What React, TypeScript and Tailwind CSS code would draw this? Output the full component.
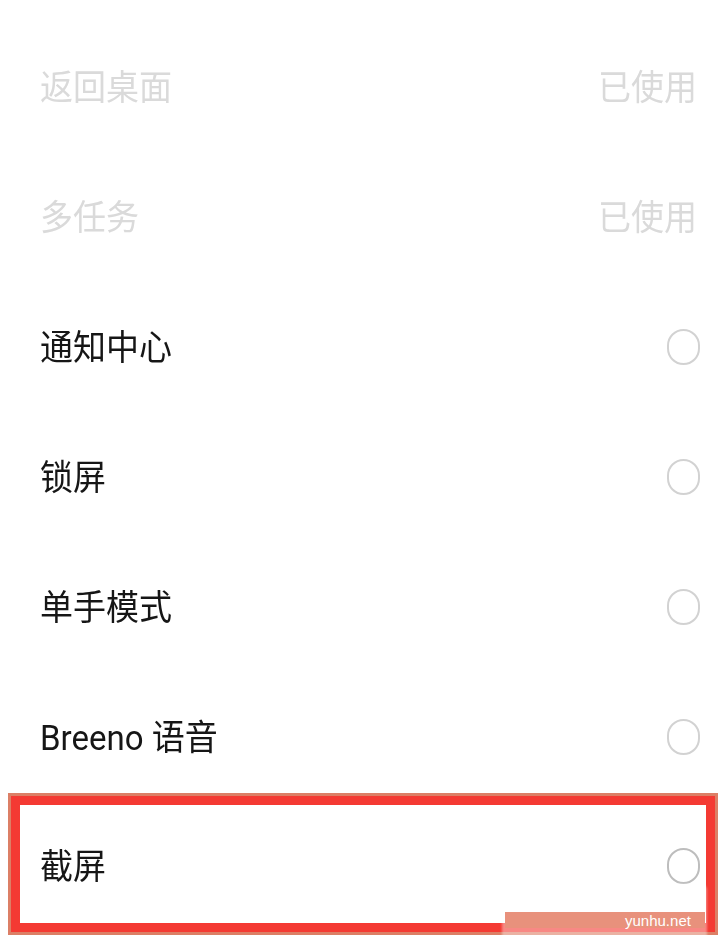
const items = [
  { id: 1, label: "返回桌面", used: true },
  { id: 2, label: "多任务", used: true },
  { id: 3, label: "通知中心", used: false },
  { id: 4, label: "锁屏", used: false },
  { id: 5, label: "单手模式", used: false },
  { id: 6, label: "Breeno 语音", used: false },
];

const font = { fontFamily: 'Roboto, "Noto Sans CJK SC", sans-serif' };

const Radio = ({ dark }: { dark?: boolean }) => (
  <span
    className={`block w-[33px] h-[36px] rounded-full border-2 ${
      dark ? "border-[#bdbdbd]" : "border-[#d2d2d2]"
    }`}
  />
);

const ShortcutList = () => {
  return (
    <div className="relative w-[725px] h-[942px] bg-white overflow-hidden" style={font}>
      <div className="pt-[22px]">
        {items.map((item) => (
          <div
            key={item.id}
            className="h-[130px] flex items-center justify-between pl-[40px] pr-[25px]"
          >
            <span
              className={`text-[33px] leading-none scale-y-[1.07] ${
                item.used ? "text-[#dadada]" : "text-[#161616]"
              }`}
            >
              {item.label}
            </span>
            {item.used ? (
              <span className="text-[33px] leading-none scale-y-[1.07] text-[#dadada] pr-[3px]">
                已使用
              </span>
            ) : (
              <Radio />
            )}
          </div>
        ))}
      </div>

      {/* highlighted row */}
      <div className="-mt-[9px] mx-[8px] mr-[7px] h-[142px] border-[3px] border-[#dc7f66]">
        <div className="h-full border-[9px] border-[#f43a33] bg-white flex items-center justify-between pl-[20px] pr-[6px] pt-[4px]">
          <span className="text-[33px] leading-none scale-y-[1.07] text-[#161616]">截屏</span>
          <Radio dark />
        </div>
      </div>

      {/* watermark */}
      <div className="absolute left-[502px] top-[884px] w-[205px] h-[58px] rounded-md bg-white/40 blur-[1px]" />
      <div className="absolute left-[505px] top-[912px] w-[200px] h-[16px] bg-[#e8917c]" />
      <span
        className="absolute left-[625px] top-[913px] text-[15px] text-white leading-none"
        style={{ fontFamily: '"Liberation Sans", sans-serif' }}
      >
        yunhu.net
      </span>
    </div>
  );
};

export default ShortcutList;
